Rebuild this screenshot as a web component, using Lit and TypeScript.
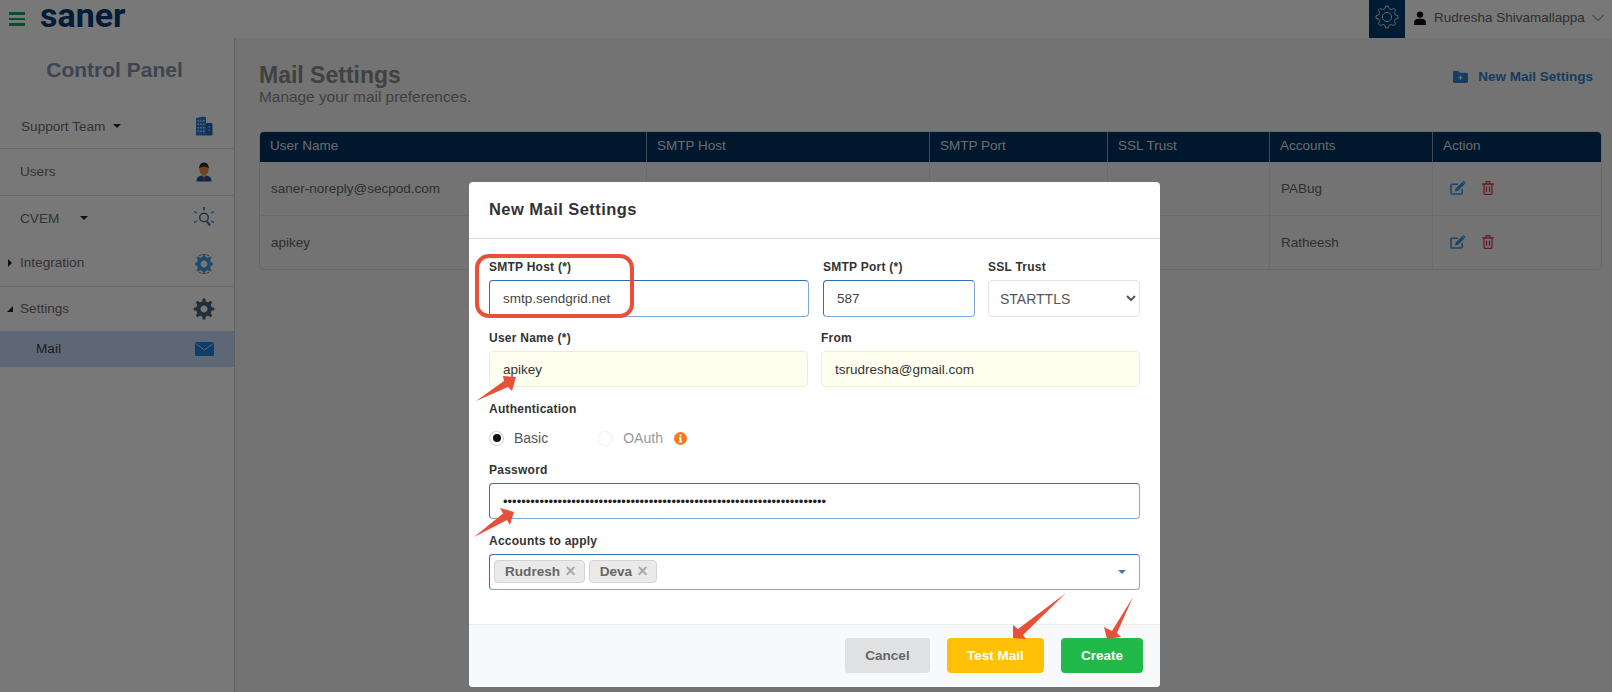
import { LitElement, html, css, svg } from "lit";
import { customElement } from "lit/decorators.js";

const gear = (cx: number, cy: number, r: number, inner: number, teeth = 8) => {
  const pts: string[] = [];
  const step = (Math.PI * 2) / teeth;
  for (let i = 0; i < teeth; i++) {
    const a = i * step - Math.PI / 2;
    const w = step * 0.2;
    const list: [number, number][] = [
      [a - step * 0.3, inner], [a - w * 0.8, r], [a + w * 0.8, r], [a + step * 0.3, inner],
    ];
    for (const [t, rad] of list) pts.push(`${(cx + rad * Math.cos(t)).toFixed(2)} ${(cy + rad * Math.sin(t)).toFixed(2)}`);
  }
  return "M" + pts.join("L") + "Z";
};

const icons = {
  building: svg`<svg width="20" height="20" viewBox="0 0 20 20"><path fill="#2f7bd1" d="M2 2 10 0.500 12 1.500V19.500H2Z"/><rect x="12" y="7" width="6.500" height="12.500" rx="1" fill="#1f68b8"/><g fill="#bcd6f2"><rect x="3.500" y="4" width="1.600" height="1.600"/><rect x="6.200" y="4" width="1.600" height="1.600"/><rect x="9" y="4" width="1.600" height="1.600"/><rect x="3.500" y="7.500" width="1.600" height="1.600"/><rect x="6.200" y="7.500" width="1.600" height="1.600"/><rect x="9" y="7.500" width="1.600" height="1.600"/><rect x="3.500" y="11" width="1.600" height="1.600"/><rect x="6.200" y="11" width="1.600" height="1.600"/><rect x="9" y="11" width="1.600" height="1.600"/><rect x="3.500" y="14.500" width="1.600" height="1.600"/><rect x="6.200" y="14.500" width="1.600" height="1.600"/><rect x="9" y="14.500" width="1.600" height="1.600"/><rect x="14.500" y="10" width="1.400" height="1.400"/><rect x="14.500" y="13.500" width="1.400" height="1.400"/></g></svg>`,
  user: svg`<svg width="20" height="20" viewBox="0 0 20 20"><path fill="#1f4fa8" d="M2.500 19.500C2.500 15 5 13.500 10 13.500S17.500 15 17.500 19.500Z"/><path fill="#e8e8e8" d="M8 13.500h4L10 16Z"/><path fill="#d33" d="M9.400 14.500h1.200l.5 4-1.100 1-1.100-1Z"/><ellipse cx="10" cy="7.500" rx="4.600" ry="6" fill="#e8983f"/><path fill="#2a2a2a" d="M5.200 6.500C5 2.500 7.500 0.500 10 0.500S15 2.500 14.800 6.500C13 4 7 4 5.200 6.500Z"/></svg>`,
  cvem: svg`<svg width="24" height="24" viewBox="0 0 24 24" fill="none"><circle cx="12" cy="11.500" r="4.300" stroke="#5a6470" stroke-width="1.400"/><path d="m15 15.500 3 4" stroke="#2b7ed6" stroke-width="2.200"/><path d="M12 1v3.200" stroke="#2b7ed6" stroke-width="1.800"/><path d="m2 5.500 3 1.700M22 5.500l-3 1.700M2 16.500l3-1.700M22 16.500l-3-1.700" stroke="#4f8fd0" stroke-width="1.400"/></svg>`,
  integ: svg`<svg width="22" height="22" viewBox="0 0 22 22" fill="none"><path fill="#3f9fe6" fill-rule="evenodd" d="${gear(11, 11, 8.800, 7.200) + "M11 7.600a3.400 3.400 0 1 0 .01 0Z"}"/><path d="M3.500 5A9.800 9.800 0 0 1 18.500 5M3.500 17A9.800 9.800 0 0 0 18.500 17" stroke="#666" stroke-width="1" stroke-dasharray="2.500 1.200"/></svg>`,
  cog: svg`<svg width="22" height="22" viewBox="0 0 22 22"><path fill="#47647c" fill-rule="evenodd" d="${gear(11, 11, 10.500, 7.800) + "M11 7.400a3.600 3.600 0 1 0 .01 0Z"}"/></svg>`,
  mail: svg`<svg width="19" height="14" viewBox="0 0 19 14"><rect width="19" height="14" rx="1.500" fill="#1b85e0"/><path d="m0.800 1.500 8.700 6.500 8.700-6.500" fill="none" stroke="#c6dbfb" stroke-width="1"/></svg>`,
  topGear: svg`<svg width="24" height="24" viewBox="0 0 24 24"><path fill="none" stroke="#d5dbe2" stroke-width="1" d="${gear(12, 12, 11, 8.600)}" stroke-linejoin="round"/><circle cx="12" cy="12" r="4.600" fill="none" stroke="#d5dbe2" stroke-width="1"/></svg>`,
  person: svg`<svg width="14" height="14" viewBox="0 0 14 14"><circle cx="7" cy="3.600" r="3.200" fill="#111"/><path fill="#111" d="M1 14v-2.600C1 9 3 7.800 5 7.800h4c2 0 4 1.200 4 3.600V14Z"/></svg>`,
  chev: svg`<svg width="14" height="8" viewBox="0 0 14 8"><path d="m1.500 1 5.500 5.500L12.500 1" fill="none" stroke="#aaa" stroke-width="1.400"/></svg>`,
  folder: svg`<svg width="15" height="12" viewBox="0 0 15 12"><path fill="#2f82c9" d="M0 1.200C0 .5.500 0 1.200 0h4l1.500 1.700h7c.7 0 1.300.5 1.300 1.200v7.900c0 .7-.6 1.200-1.300 1.200H1.200C.5 12 0 11.500 0 10.800Z"/><path d="M7.500 4.600v4.200M5.400 6.700h4.200" stroke="#dfe9f3" stroke-width="1.200"/></svg>`,
  edit: svg`<svg width="16" height="14" viewBox="0 0 16 14"><path fill="none" stroke="#3a94e2" stroke-width="1.600" d="M12.200 8v4c0 .6-.4 1-1 1H2c-.6 0-1-.4-1-1V4.200c0-.6.4-1 1-1h6"/><path fill="#3a94e2" d="m5.500 7.800 6.700-6.700 2.300 2.300-6.700 6.700-2.800.5ZM13 .4c.4-.4.9-.4 1.300 0l1 1c.4.4.4.9 0 1.300l-.4.400-2.300-2.300Z"/></svg>`,
  trash: svg`<svg width="12" height="14" viewBox="0 0 12 14"><path fill="none" stroke="#d9414f" stroke-width="1.300" d="M2 3.200V12.400c0 .5.400 .9.900 .9h6.200c.5 0 .9-.4.900-.9V3.200M.3 3h11.400M4 3V1.200c0-.3.200-.5.500-.5h3c.3 0 .5.200.5.500V3M4.500 5.500v5.500M7.500 5.500v5.500"/></svg>`,
  info: svg`<svg width="13" height="13" viewBox="0 0 13 13"><circle cx="6.500" cy="6.500" r="6.500" fill="#f47a20"/><path fill="#fff" d="M5.600 2.500h1.800v1.700H5.600ZM4.900 5.300h2.500v3.900h.8v1.200H4.800V9.200h.8V6.500h-.7Z"/></svg>`,
};

const sideRows = [
  { label: "Support Team", cls: "s1", caret: "after", icon: icons.building },
  { label: "Users", cls: "s2 line", icon: icons.user },
  { label: "CVEM", cls: "s3 cv", caret: "after", icon: icons.cvem },
  { label: "Integration", cls: "s4 line", caret: "right", icon: icons.integ },
  { label: "Settings", cls: "s5", caret: "open", icon: icons.cog },
  { label: "Mail", cls: "s6 active", icon: icons.mail },
];

const tableRows = [
  { user: "saner-noreply@secpod.com", acc: "PABug" },
  { user: "apikey", acc: "Ratheesh" },
];
const columns = ["User Name", "SMTP Host", "SMTP Port", "SSL Trust", "Accounts", "Action"];

@customElement("app-root")
export class AppRoot extends LitElement {
  static styles = css`
    :host { display: block; height: 692px; position: relative; overflow: hidden; font-family: "Liberation Sans", Arial, sans-serif; font-size: 14px; color: #6e6e6e; background: #fafafa; }
    * { box-sizing: border-box; }
    .page { height: 692px; display: flex; flex-direction: column; }
    .top { height: 38px; flex: none; display: flex; align-items: center; background: #ffffff; }
    .burger { width: 16px; margin-left: 9px; display: flex; flex-direction: column; gap: 3px; }
    .burger i { display: block; height: 2.500px; background: #10a85e; }
    .logo { margin: 0 0 7px 15px; font-family: Roboto, sans-serif; font-weight: 700; font-size: 34px; line-height: 31px; color: #003d7a; }
    .spacer { flex: 1; }
    .gearbox { width: 36px; height: 38px; background: #003a70; display: flex; align-items: center; justify-content: center; padding-bottom: 5px; }
    .me { display: flex; align-items: center; height: 38px; padding: 0 7px 3px 8px; color: #666; font-size: 13.500px; }
    .me span { margin: 0 7px; width: 150px; white-space: nowrap; }
    .body { flex: 1; display: flex; min-height: 0; }
    .side { width: 235px; flex: none; border-right: 1px solid #cfcfcf; background: #ffffff; }
    .side h2 { margin: 0; height: 65px; padding-top: 19px; text-align: center; font-size: 21px; line-height: 26px; font-weight: 700; color: #8493ad; padding-right: 5px; }
    .row { display: flex; align-items: center; padding-left: 20px; position: relative; color: #6f6f6f; border-bottom: 1px solid transparent; font-size: 13.600px; }
    .row .ico { position: absolute; left: 184px; width: 40px; height: 100%; display: flex; align-items: center; justify-content: center; top: 0; }
    .row.line { border-bottom-color: #dedede; }
    .s1 { height: 46px; border-bottom-color: #dedede; padding-left: 21px; padding-top: 1px; }
    .s2 { height: 47px; padding-bottom: 1px; }
    .s3 { height: 45px; }
    .s4 { height: 46px; padding-bottom: 2px; }
    .s5 { height: 44px; }
    .s6 { height: 36px; padding-left: 36px; background: #c6dbfb; color: #444; }
    .caret { width: 0; height: 0; display: inline-block; }
    .caret.after { border: 4px solid transparent; border-top-color: #222; border-bottom-width: 0; margin-left: 8px; }
    .cv .caret.after { margin-left: 21px; }
    .caret.right { position: absolute; left: 8px; border: 4px solid transparent; border-left-color: #222; border-right-width: 0; }
    .caret.open { position: absolute; left: 7px; border-style: solid; border-width: 0 0 6px 6px; border-color: transparent transparent #222 transparent; }
    .main { flex: 1; padding: 24px 10px 0 24px; background: #f4f4f4; min-width: 0; }
    .head { display: flex; justify-content: space-between; align-items: flex-start; height: 69px; }
    .head h1 { margin: 0; font-size: 23px; line-height: 27px; font-weight: 700; color: #8a8a8a; }
    .head p { margin: 0; font-size: 15.400px; line-height: 16px; color: #8a8a8a; }
    .newlink { display: flex; align-items: center; gap: 10px; color: #2f82c9; font-weight: 700; font-size: 13.500px; margin-top: 7px; padding-right: 9px; }
    .table { border: 1px solid #dedede; border-radius: 5px; overflow: hidden; background: #f4f4f4; }
    .tr { display: grid; grid-template-columns: 387px 283px 178px 162px 163px 1fr; font-size: 13.500px; }
    .thead { background: #003160; height: 30px; color: #dfe4ea; }
    .thead div { padding: 6px 10px 0; border-right: 1px solid #8ca0b5; line-height: 16px; }
    .thead div:last-child { border-right: 0; }
    .tbody { height: 54px; border-top: 1px solid #e3e3e3; color: #666; }
    .tbody:nth-child(2) { border-top: 0; height: 53px; }
    .tbody div { padding: 0 11px 1px; display: flex; align-items: center; border-right: 1px solid #e3e3e3; }
    .tbody div:last-child { border-right: 0; padding-left: 17px; gap: 16px; }
    .overlay { position: absolute; inset: 0; background: rgba(0, 0, 0, 0.53); }
    .modal { position: absolute; left: 469px; top: 182px; width: 691px; height: 505px; background: #fff; border-radius: 4px; display: flex; flex-direction: column; color: #333; }
    .mhead { height: 57px; flex: none; border-bottom: 1px solid #dedede; padding: 0 20px 2px; display: flex; align-items: center; font-size: 16.500px; font-weight: 700; color: #333; letter-spacing: 0.450px; }
    .mbody { flex: 1; padding: 21px 20px 0; display: flex; flex-direction: column; }
    .frow { display: flex; margin-bottom: 15px; }
    .frow.first { margin-bottom: 14px; }
    .frow.first input, .frow.first select { height: 37px; }
    .f1 { width: 320px; margin-right: 14px; } .f2 { width: 152px; margin-right: 13px; } .f3 { width: 152px; }
    .f4 { width: 319px; margin-right: 13px; } .f5 { width: 319px; }
    .full { width: 651px; }
    label, .lab { display: block; height: 15px; line-height: 15px; margin-bottom: 5px; font-size: 12px; font-weight: 700; color: #333; white-space: nowrap; letter-spacing: 0.250px; }
    input, select { display: block; width: 100%; height: 36px; border-radius: 4px; border: 1px solid #e4e4e4; background: #fff; font-family: inherit; font-size: 13.500px; color: #444; padding: 0 13px; outline: none; }
    input.focus { border-color: #2f6fb0 #7ea9d6 #7ea9d6 #2f6fb0; }
    input.fill { background: #fffff0; border-color: #f2eecb; color: #333; }
    input.pw { color: #222; font-size: 13px; }
    select { padding: 0 6px 0 7px; color: #555; font-size: 14px; }
    .radios { height: 32px; display: flex; align-items: center; margin-bottom: 9px; font-size: 14px; color: #555; }
    .radio { width: 15px; height: 15px; border-radius: 50%; border: 1px solid #cfcfcf; display: flex; align-items: center; justify-content: center; margin-right: 10px; flex: none; }
    .radio i { width: 8px; height: 8px; border-radius: 50%; background: #111; }
    .radio.off { border-color: #eee; margin-left: 50px; }
    .muted { color: #999; margin-right: 11px; }
    .tags { height: 36px; border: 1px solid; border-color: #2f6fb0 #7ea9d6 #7ea9d6 #2f6fb0; border-radius: 4px; display: flex; align-items: center; padding: 0 0 1px 4px; gap: 4px; }
    .tag { height: 23px; border: 1px solid #d4d4d4; border-radius: 4px; background: #eaeaea; display: flex; align-items: center; gap: 5px; padding: 0 8px 0 10px; color: #666; font-weight: 700; font-size: 13.600px; }
    .tag b { color: #aaa; font-size: 18px; line-height: 15px; font-weight: 700; }
    .tags .down { margin-left: auto; margin-right: 13px; width: 0; height: 0; border: 4px solid transparent; border-top-color: #3b7ab8; border-bottom-width: 0; border-left-width: 4.500px; border-right-width: 4.500px; }
    .mfoot { height: 63px; flex: none; background: #f8f9fa; border-top: 1px solid #ececec; border-radius: 0 0 4px 4px; display: flex; align-items: center; justify-content: flex-end; padding: 0 17px 2px 0; gap: 17px; }
    button { height: 35px; border: 0; border-radius: 4px; font-family: inherit; font-size: 13.500px; font-weight: 700; color: #fff; padding: 0; }
    .cancel { width: 85px; background: #e0e1e3; color: #666; }
    .test { width: 97px; background: #ffc107; }
    .create { width: 82px; background: #22b94b; }
    .mark { position: absolute; left: 475px; top: 254px; width: 159px; height: 64px; border: 4px solid #e8503a; border-radius: 14px; pointer-events: none; }
    .arrows { position: absolute; left: 0; top: 0; pointer-events: none; }
  `;

  render() {
    return html`
      <div class="page">
        <header class="top">
          <div class="burger"><i></i><i></i><i></i></div>
          <div class="logo">saner</div>
          <div class="spacer"></div>
          <div class="gearbox">${icons.topGear}</div>
          <div class="me">${icons.person}<span>Rudresha Shivamallappa</span>${icons.chev}</div>
        </header>
        <div class="body">
          <nav class="side">
            <h2>Control Panel</h2>
            ${sideRows.map((r) => html`
              <div class="row ${r.cls}">
                ${r.caret === "right" || r.caret === "open" ? html`<i class="caret ${r.caret}"></i>` : ""}
                <span>${r.label}</span>
                ${r.caret === "after" ? html`<i class="caret after"></i>` : ""}
                <span class="ico">${r.icon}</span>
              </div>`)}
          </nav>
          <main class="main">
            <div class="head">
              <div>
                <h1>Mail Settings</h1>
                <p>Manage your mail preferences.</p>
              </div>
              <div class="newlink">${icons.folder}<span>New Mail Settings</span></div>
            </div>
            <div class="table">
              <div class="tr thead">${columns.map((c) => html`<div>${c}</div>`)}</div>
              ${tableRows.map((r) => html`
                <div class="tr tbody">
                  <div>${r.user}</div><div></div><div></div><div></div>
                  <div>${r.acc}</div>
                  <div>${icons.edit}${icons.trash}</div>
                </div>`)}
            </div>
          </main>
        </div>
      </div>
      <div class="overlay">
        <section class="modal">
          <div class="mhead">New Mail Settings</div>
          <div class="mbody">
            <div class="frow first">
              <div class="f1"><label>SMTP Host (*)</label><input class="focus" value="smtp.sendgrid.net" /></div>
              <div class="f2"><label>SMTP Port (*)</label><input class="focus" value="587" /></div>
              <div class="f3"><label>SSL Trust</label><select><option>STARTTLS</option></select></div>
            </div>
            <div class="frow">
              <div class="f4"><label>User Name (*)</label><input class="fill" value="apikey" /></div>
              <div class="f5"><label>From</label><input class="fill" value="tsrudresha@gmail.com" /></div>
            </div>
            <div class="lab">Authentication</div>
            <div class="radios">
              <span class="radio"><i></i></span><span>Basic</span>
              <span class="radio off"></span><span class="muted">OAuth</span>${icons.info}
            </div>
            <div class="frow">
              <div class="full"><label>Password</label><input class="focus pw" type="password" value="${"x".repeat(71)}" /></div>
            </div>
            <div class="full">
              <div class="lab">Accounts to apply</div>
              <div class="tags">
                <span class="tag">Rudresh <b>×</b></span>
                <span class="tag">Deva <b>×</b></span>
                <i class="down"></i>
              </div>
            </div>
          </div>
          <footer class="mfoot">
            <button class="cancel">Cancel</button>
            <button class="test">Test Mail</button>
            <button class="create">Create</button>
          </footer>
        </section>
        <div class="mark"></div>
        <svg class="arrows" width="1612" height="692" fill="#e8503a">
          <polygon points="476,401 504,381 503,376 516,377 512,391 508,387" />
          <polygon points="474,537 503,513.500 500,508 514,512 510,525 507,520" />
          <polygon points="1066,593 1018,629 1013,625 1013,638 1026,639 1023,635" />
          <polygon points="1133,597 1112,631 1104,627 1107,639 1121,637 1117,633" />
        </svg>
      </div>
    `;
  }
}
